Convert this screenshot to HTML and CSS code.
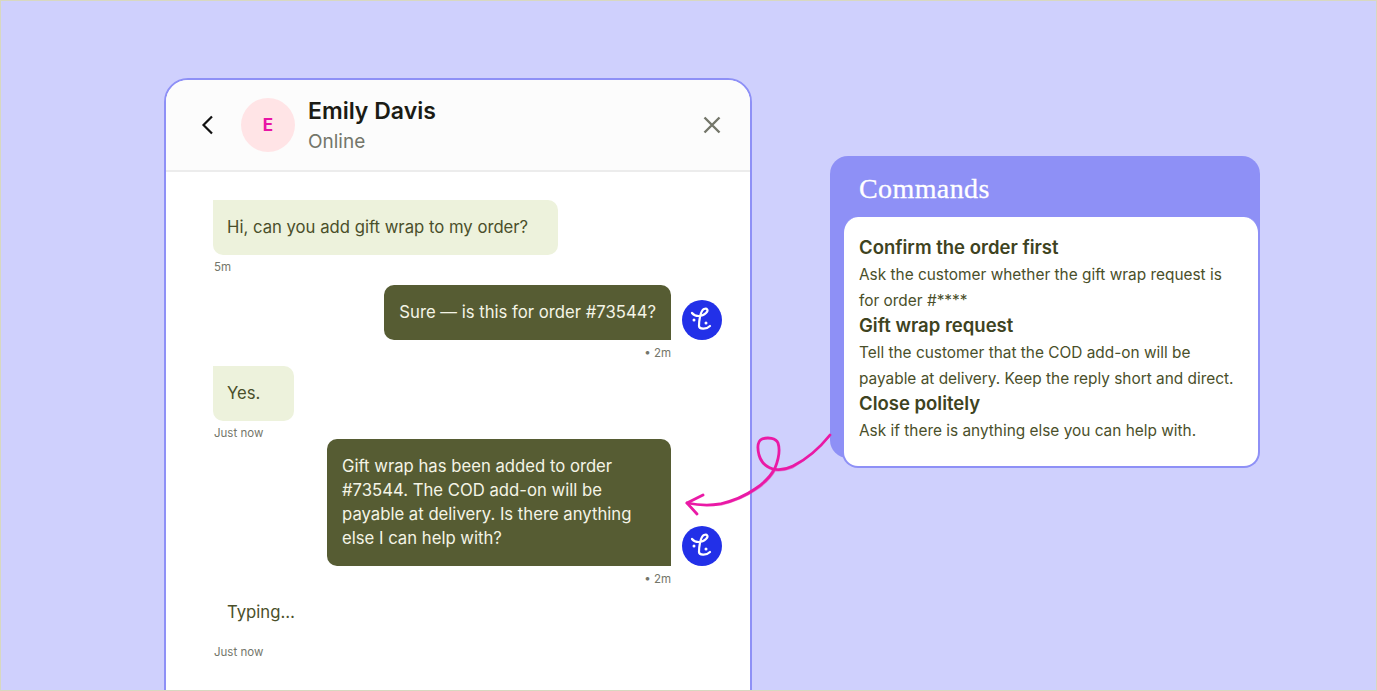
FILE: index.html
```html
<!DOCTYPE html>
<html lang="en">
<head>
  <meta charset="UTF-8" />
  <title>Commands</title>
  <link rel="stylesheet" href="styles.css">
</head>
<body>
  <div class="scene">
    <div class="phone">
      <header class="phone-head">
        <svg class="back" width="16" height="24" viewBox="0 0 16 24"><path d="M13 3.500 4.500 12 13 20.500" /></svg>
        <div class="avatar">E</div>
        <div class="who">
          <div class="name">Emily Davis</div>
          <div class="status">Online</div>
        </div>
        <svg class="close" width="20" height="20" viewBox="0 0 20 20"><path d="M2.500 2.500 17.500 17.500M17.500 2.500 2.500 17.500" /></svg>
      </header>
      <div class="thread">
        <div class="msg in first">
          <div class="bubble wide">Hi, can you add gift wrap to my order?</div>
          <div class="time">5m</div>
        </div>
        <div class="msg out">
          <div class="out-row">
            <div class="bubble">Sure — is this for order #73544?</div>
            <svg class="bot" viewBox="0 0 40 40"><circle cx="20" cy="20" r="20" /><path d="M10 13C13 17 20 17 24 13 27 10 25 8 22 9 18 11 17 22 17 26 17 29 24 30 28 26" /><circle cx="12" cy="20" r="1.500" class="dot" /><circle cx="24" cy="23" r="1.500" class="dot" /></svg>
          </div>
          <div class="time">• 2m</div>
        </div>
        <div class="msg in third">
          <div class="bubble short">Yes.</div>
          <div class="time">Just now</div>
        </div>
        <div class="msg out">
          <div class="out-row">
            <div class="bubble long">Gift wrap has been added to order #73544. The COD add-on will be payable at delivery. Is there anything else I can help with?</div>
            <svg class="bot" viewBox="0 0 40 40"><circle cx="20" cy="20" r="20" /><path d="M10 13C13 17 20 17 24 13 27 10 25 8 22 9 18 11 17 22 17 26 17 29 24 30 28 26" /><circle cx="12" cy="20" r="1.500" class="dot" /><circle cx="24" cy="23" r="1.500" class="dot" /></svg>
          </div>
          <div class="time">• 2m</div>
        </div>
        <div class="msg in typing">
          <div class="typing-text">Typing…</div>
          <div class="time">Just now</div>
        </div>
      </div>
    </div>

    <aside class="commands">
      <h2>Commands</h2>
      <div class="command-card">
        <h3>Confirm the order first</h3>
        <p>Ask the customer whether the gift wrap request is for order #****</p>
        <h3>Gift wrap request</h3>
        <p>Tell the customer that the COD add-on will be payable at delivery. Keep the reply short and direct.</p>
        <h3>Close politely</h3>
        <p>Ask if there is anything else you can help with.</p>
      </div>
    </aside>

    <svg class="squiggle" width="1377" height="691" viewBox="0 0 1377 691">
      <path d="M830 435C818 450 805 460 793 466 785 470 778 470 773 469 766 467 761 462 759 455 757 447 758 441 762 439 768 437 776 438 778 443 780 449 779 458 775 468 771 476 764 483 755 489 745 496 733 501 720 504 708 506 697 505 687 503" />
      <path class="rough" d="M829 437C817 451 804 461 792 468 784 471 777 471 772 470M776 469C772 477 765 484 756 490 746 497 734 502 721 505" />
      <path d="M703 495 687 503 697 514" />
    </svg>
  </div>
</body>
</html>
```

FILE: styles.css
```css
* {
  box-sizing: border-box;
}
body {
  margin: 0;
  height: 691px;
  overflow: hidden;
  font-family: "Inter", "Liberation Sans", sans-serif;
  background: #cfd0fd;
}
.scene {
  position: relative;
  height: 691px;
  border: 1px solid #d8d8c0;
  padding: 77px 0 0 163px;
  display: flex;
  align-items: flex-start;
  gap: 78px;
  overflow: hidden;
}
.phone {
  width: 588px;
  height: 640px;
  flex: none;
  background: white;
  border: 2px solid #8e90f6;
  border-radius: 24px 24px 0 0;
  overflow: hidden;
}
.phone-head {
  height: 92px;
  display: flex;
  align-items: center;
  padding: 0 28px 0 33px;
  background: #fcfcfc;
  border-bottom: 2px solid #ececec;
}
.back path {
  fill: none;
  stroke: #111;
  stroke-width: 2.2;
}
.avatar {
  width: 54px;
  height: 54px;
  margin-left: 26px;
  border-radius: 50%;
  background: #ffe4e6;
  color: #e815a5;
  font-weight: 700;
  font-size: 17px;
  display: flex;
  align-items: center;
  justify-content: center;
}
.who {
  margin-left: 13px;
  padding-top: 2px;
  flex: 1;
}
.name {
  font-size: 23px;
  font-weight: 600;
  line-height: 30px;
  color: #1b1b14;
}
.status {
  font-size: 19px;
  line-height: 30px;
  margin-top: 1px;
  color: #74766a;
}
.close path {
  fill: none;
  stroke: #74766a;
  stroke-width: 2.4;
}
.thread {
  padding: 28px 28px 0 47px;
  color: #4a4f2a;
}
.msg {
  display: flex;
  flex-direction: column;
  align-items: flex-start;
  margin-bottom: 6px;
}
.msg.first {
  margin-bottom: 11px;
}
.msg.third {
  margin-bottom: -1px;
}
.msg.out {
  align-items: flex-end;
  padding-right: 51px;
}
.msg.out .out-row {
  display: flex;
  align-items: flex-end;
  margin-right: -51px;
}
.bubble {
  font-size: 16.700px;
  line-height: 24px;
  padding: 15px 14px 16px;
  border-radius: 0 10px 10px 10px;
  background: #edf2dc;
}
.msg.out .bubble {
  background: #565c33;
  color: #f4f4e6;
  border-radius: 10px 10px 0 10px;
  padding-left: 15px;
  padding-right: 15px;
}
.bubble.wide {
  width: 345px;
}
.bubble.short {
  width: 81px;
}
.bubble.long {
  width: 344px;
}
.bot {
  width: 40px;
  height: 40px;
  margin: 0 0 0 11px;
  flex: none;
}
.bot circle {
  fill: #2230e8;
}
.bot circle.dot {
  fill: white;
}
.bot path {
  fill: none;
  stroke: white;
  stroke-width: 2.200;
  stroke-linecap: round;
}
.time {
  font-size: 11.500px;
  line-height: 14px;
  margin: 5px 0 0 1px;
  color: #74766a;
}
.msg.out .time {
  margin-top: 6px;
}
.typing {
  margin-top: 14px;
}
.typing-text {
  font-size: 16.700px;
  line-height: 24px;
  padding: 0 14px;
  margin-bottom: 16px;
}
.commands {
  width: 430px;
  height: 302px;
  margin-top: 78px;
  flex: none;
  background: #8e90f6;
  border-radius: 18px;
}
.commands h2 {
  margin: 0;
  padding: 16px 0 0 29px;
  height: 61px;
  font-family: "Liberation Serif", serif;
  font-weight: 400;
  font-size: 28px;
  letter-spacing: 0.4px;
  line-height: 34px;
  color: white;
  -webkit-text-stroke: 0.3px white;
}
.command-card {
  margin-left: 12px;
  width: 418px;
  height: 251px;
  padding: 17px 15px;
  background: white;
  border: 2px solid #8e90f6;
  border-top: 0;
  border-radius: 16px;
  color: #4a4f2a;
}
.command-card h3 {
  margin: 0;
  font-size: 18.500px;
  font-weight: 600;
  line-height: 26px;
  color: #3e4321;
}
.command-card p {
  margin: 2px 0 -2px;
  font-size: 15.400px;
  line-height: 26px;
}
.squiggle {
  position: absolute;
  left: -1px;
  top: -1px;
  pointer-events: none;
}
.squiggle path {
  fill: none;
  stroke: #ea1aa6;
  stroke-width: 2.800;
  stroke-linecap: round;
  stroke-linejoin: round;
}
.squiggle path.rough {
  stroke-width: 1.500;
  opacity: 0.5;
}
```
